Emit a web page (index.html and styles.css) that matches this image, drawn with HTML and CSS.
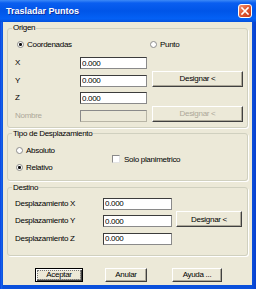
FILE: index.html
```html
<!DOCTYPE html>
<html lang="es">

<head>
    <meta charset="UTF-8">
    <meta name="viewport" content="width=device-width, initial-scale=1.0">
    <title>Trasladar Puntos</title>
    <link rel="stylesheet" href="styles.css">
</head>

<body>
    <div class="window">
        <div class="titlebar">
            <span class="title">Trasladar Puntos</span>
            <button class="close">
                <svg width="10" height="10" viewBox="0 0 10 10">
                    <path d="M2 2 L8 8 M8 2 L2 8" stroke="#fff" stroke-width="1.6" stroke-linecap="square" />
                </svg>
            </button>
        </div>

        <div class="client">
            <!-- Origen -->
            <fieldset class="group origen">
                <legend>Origen</legend>
                <div class="radio-row">
                    <label class="opt first"><span class="radio checked"></span>Coordenadas</label>
                    <label class="opt"><span class="radio"></span>Punto</label>
                </div>
                <div class="rows">
                    <div class="row">
                        <span class="lbl">X</span>
                        <input class="field" type="text" value="0.000">
                    </div>
                    <div class="row">
                        <span class="lbl">Y</span>
                        <input class="field" type="text" value="0.000">
                        <button class="btn designar">Designar &lt;</button>
                    </div>
                    <div class="row">
                        <span class="lbl">Z</span>
                        <input class="field" type="text" value="0.000">
                    </div>
                    <div class="row">
                        <span class="lbl off">Nombre</span>
                        <input class="field off" type="text" value="" disabled>
                        <button class="btn designar off">Designar &lt;</button>
                    </div>
                </div>
            </fieldset>

            <!-- Tipo de Desplazamiento -->
            <fieldset class="group tipo">
                <legend>Tipo de Desplazamiento</legend>
                <div class="tipo-body">
                    <div class="tipo-radios">
                        <label class="opt"><span class="radio"></span>Absoluto</label>
                        <label class="opt"><span class="radio checked"></span>Relativo</label>
                    </div>
                    <label class="opt"><span class="check"></span>Solo planimetrico</label>
                </div>
            </fieldset>

            <!-- Destino -->
            <fieldset class="group destino">
                <legend>Destino</legend>
                <div class="rows">
                    <div class="row">
                        <span class="lbl">Desplazamiento X</span>
                        <input class="field" type="text" value="0.000">
                    </div>
                    <div class="row">
                        <span class="lbl">Desplazamiento Y</span>
                        <input class="field" type="text" value="0.000">
                        <button class="btn designar">Designar &lt;</button>
                    </div>
                    <div class="row">
                        <span class="lbl">Desplazamiento Z</span>
                        <input class="field" type="text" value="0.000">
                    </div>
                </div>
            </fieldset>

            <div class="actions">
                <button class="btn aceptar">Aceptar</button>
                <button class="btn anular">Anular</button>
                <button class="btn ayuda">Ayuda ...</button>
            </div>
        </div>
    </div>
</body>

</html>
```

FILE: styles.css
```css
* {
    box-sizing: border-box;
}

body {
    margin: 0;
    font-family: "Liberation Sans", Arial, sans-serif;
    font-size: 8px;
    letter-spacing: -0.3px;
    color: #000;
    background-color: #fff;
}

.window {
    width: 256px;
    height: 289px;
    display: flex;
    flex-direction: column;
    background: linear-gradient(to right, #0831d9 0, #1665ee 1px, #0a50dc 3px, #0a50dc 252px, #0842d0 255px);
}

/* barra de titulo */
.titlebar {
    height: 22px;
    display: flex;
    align-items: center;
    padding: 0 4px 0 6px;
    background: linear-gradient(#3d8af7 0, #0a5ef0 3px, #0055e8 50%, #0461f5 85%, #0350dc 100%);
}

.title {
    flex: 1;
    color: #fff;
    font-size: 9px;
    font-weight: bold;
    letter-spacing: 0;
    text-shadow: 1px 1px #10309e;
}

.close {
    width: 14px;
    height: 14px;
    padding: 0;
    border: 1px solid #fff;
    border-radius: 3px;
    background: linear-gradient(135deg, #f4977a, #e05a33 45%, #c4391a);
    display: flex;
    align-items: center;
    justify-content: center;
}

/* area de cliente */
.client {
    flex: 1;
    margin: 0 4px 4px 3px;
    padding: 1px 4px 0 4px;
    background-color: #ece9d8;
    display: flex;
    flex-direction: column;
}

.group {
    margin: 0;
    min-width: 0;
    border: 1px solid #d0d0bf;
    border-radius: 3px;
    box-shadow: 1px 1px 0 #fff;
}

.group legend {
    height: 10px;
    margin-left: -3px;
    padding: 0 1px;
    line-height: 10px;
}

.origen {
    padding: 5px 0 5px 7px;
}

.tipo {
    margin-top: 1px;
    padding: 6px 0 6px 7px;
}

.destino {
    margin-top: 2px;
    padding: 5px 0 10px 7px;
}

.opt {
    height: 12px;
    display: flex;
    align-items: center;
    white-space: nowrap;
}

.radio-row {
    display: flex;
    padding-left: 2px;
}

.radio-row .first {
    width: 133px;
}

.radio {
    width: 7px;
    height: 7px;
    margin-right: 3px;
    border: 1px solid #8d8d8d;
    border-radius: 50%;
    background: #fff;
}

.radio.checked {
    background: radial-gradient(circle, #111 0, #111 1.2px, #fff 1.9px);
}

.check {
    width: 8px;
    height: 8px;
    margin-right: 4px;
    border: 1px solid;
    border-color: #8a8a8a #e4e4e4 #e4e4e4 #8a8a8a;
    background: #fff;
}

.tipo-body {
    display: flex;
    align-items: center;
}

.tipo-radios {
    width: 97px;
    flex-shrink: 0;
    padding-left: 1px;
    display: flex;
    flex-direction: column;
    gap: 5px;
}

/* filas de etiqueta + campo */
.rows {
    display: flex;
    flex-direction: column;
    gap: 5.5px;
}

.origen .rows {
    margin-top: 7px;
}

.row {
    height: 12px;
    display: flex;
    align-items: flex-start;
}

.lbl {
    flex: none;
    line-height: 12px;
    white-space: nowrap;
}

.origen .lbl {
    width: 65px;
}

.destino .lbl {
    width: 88px;
}

.lbl.off {
    color: #aca899;
}

.field {
    flex: none;
    height: 12px;
    margin: 0;
    padding: 0 1px;
    border: 1px solid;
    border-color: #3c3c3c #8a8a8a #8a8a8a #3c3c3c;
    background: #fff;
    font: inherit;
    letter-spacing: inherit;
    color: #000;
}

.origen .field {
    width: 67px;
}

.destino .field {
    width: 69px;
}

.field.off {
    background: #ece9d8;
    border-color: #8a8a8a #b8b5a6 #b8b5a6 #8a8a8a;
}

/* botones */
.btn {
    flex: none;
    padding: 0;
    border: 1px solid;
    border-color: #fff #404040 #404040 #fff;
    box-shadow: inset -1px -1px #aca899;
    background-color: #ece9d8;
    font: inherit;
    letter-spacing: inherit;
    color: #000;
}

.btn.off {
    color: #aca899;
}

.designar {
    height: 16px;
    margin-top: -4px;
}

.origen .designar {
    width: 91px;
    margin-left: 5px;
}

.destino .designar {
    width: 66px;
    margin-left: 4px;
}

.actions {
    margin-top: 12px;
    padding-left: 28px;
    display: flex;
}

.actions .btn {
    height: 14px;
}

.aceptar {
    width: 48px;
    border-color: #000;
    box-shadow: inset 1px 1px #fff, inset -1px -1px #404040, inset -2px -2px #aca899;
    outline: 1px dotted #777;
    outline-offset: -3px;
}

.anular {
    width: 42px;
    margin-left: 22px;
}

.ayuda {
    width: 50px;
    margin-left: 25px;
}
```
